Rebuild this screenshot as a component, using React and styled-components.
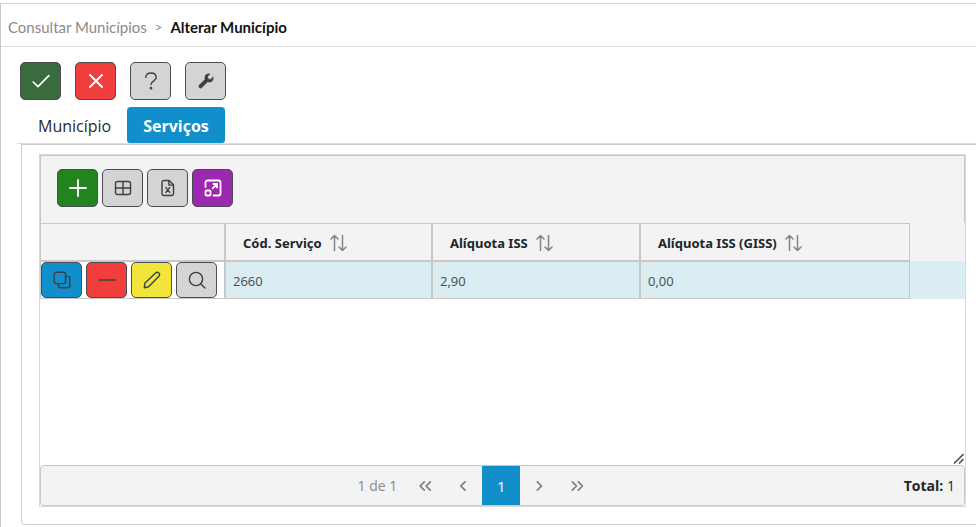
import React, { useState } from 'react';
import styled, { createGlobalStyle } from 'styled-components';

const GlobalStyle = createGlobalStyle`
  * {
    box-sizing: border-box;
  }

  body {
    margin: 0;
    background-color: #fff;
    color: #212529;
    font-family: 'Open Sans', 'Noto Sans', sans-serif;
    font-size: 13px;
  }
`;

const Page = styled.div`
  display: flex;
  flex-direction: column;
  min-height: 100vh;
  padding-top: 3px;
`;

const Frame = styled.div`
  display: flex;
  flex: 1;
  flex-direction: column;
  border-top: 1px solid #d4d4d4;
  border-left: 1px solid #c8c8c8;
`;

const Breadcrumb = styled.nav`
  display: flex;
  align-items: center;
  gap: 8px;
  height: 43px;
  padding: 4px 7px 0;
  border-bottom: 1px solid #dedede;
  font-family: Lato, sans-serif;
  font-size: 15px;
  color: #8a8a8a;
`;

const BreadcrumbLink = styled.a`
  color: inherit;
  text-decoration: none;
`;

const Separator = styled.span`
  font-size: 13px;
`;

const Current = styled.span`
  color: #111;
  font-weight: 700;
`;

const Content = styled.main`
  display: flex;
  flex: 1;
  flex-direction: column;
  padding: 15px 0 2px 16px;
`;

const ButtonRow = styled.div`
  display: flex;
  gap: ${(props) => props.$gap || '4px'};
`;

const PageActions = styled(ButtonRow)`
  padding-left: 3px;
`;

const IconButton = styled.button`
  display: flex;
  align-items: center;
  justify-content: center;
  width: 41px;
  height: ${(props) => props.$height || '38px'};
  padding: 0;
  border: 1px solid #4b4d52;
  border-radius: 5px;
  background-color: ${(props) => props.$bg || '#d4d4d4'};
  color: ${(props) => props.$color || '#3c3f46'};
  cursor: pointer;
`;

const Icon = styled.svg`
  display: block;
  width: 18px;
  height: 18px;
  fill: none;
  stroke: currentColor;
  stroke-width: ${(props) => props.$stroke || 1.4};
  stroke-linecap: round;
  stroke-linejoin: round;
`;

const TabList = styled.div`
  display: flex;
  margin-top: 7px;
  border-bottom: 1px solid #dcdcdc;
`;

const Tab = styled.button`
  height: 36px;
  padding: 1px 16px 0;
  border: none;
  border-radius: 4px 4px 3px 3px;
  background-color: ${(props) => (props.$active ? '#108fca' : 'transparent')};
  color: ${(props) => (props.$active ? '#fff' : '#2b2b2b')};
  font-family: inherit;
  font-size: 16px;
  font-weight: ${(props) => (props.$active ? 700 : 400)};
  cursor: pointer;

  &:first-child {
    padding-left: 21px;
  }
`;

const Panel = styled.section`
  display: flex;
  flex: 1;
  flex-direction: column;
  margin-left: 4px;
  padding: 9px 10px 17px 17px;
  border: 1px solid #cfcfcf;
  border-right: none;
  border-radius: 0 0 0 4px;
`;

const Grid = styled.div`
  display: flex;
  flex: 1;
  flex-direction: column;
  border: 1px solid #d9d9d9;
`;

const Toolbar = styled.div`
  padding: 13px 16px 16px;
  border: 1px solid #c8c8c8;
  border-bottom: none;
  background-color: #f3f3f3;
`;

const ScrollArea = styled.div`
  position: relative;
  flex: 1;
`;

const Table = styled.table`
  width: 100%;
  table-layout: fixed;
  border-collapse: separate;
  border-spacing: 0;
`;

const Column = styled.col`
  width: ${(props) => props.$width};
`;

const HeaderRow = styled.tr`
  height: 38px;
  background-color: #f3f3f3;
`;

const HeaderCell = styled.th`
  padding: 2px 17px 0;
  border: 1px solid #c8c8c8;
  text-align: left;
`;

const SortButton = styled.button`
  display: flex;
  align-items: center;
  gap: 7px;
  padding: 0;
  border: none;
  background: none;
  color: inherit;
  font-family: 'Noto Sans', sans-serif;
  font-size: 13px;
  font-weight: 700;
  white-space: nowrap;
  cursor: pointer;

  svg {
    color: #858585;
  }
`;

const BodyRow = styled.tr`
  height: 38px;
  background-color: #d9edf3;
`;

const Cell = styled.td`
  padding: 2px 7px 0;
  border: 1px solid #c8c8c8;
  color: #4a4a4a;
`;

const ActionsCell = styled(Cell)`
  padding: 0;
  background-color: #fff;
`;

const FillerCell = styled.td`
  padding: 0;
`;

const ResizeHandle = styled.svg`
  position: absolute;
  right: 1px;
  bottom: 1px;
  width: 11px;
  height: 11px;
  stroke: #555;
  stroke-width: 1.6;
`;

const Footer = styled.div`
  display: flex;
  align-items: center;
  padding-right: 9px;
  border: 1px solid #c8c8c8;
  border-radius: 4px;
  background-color: #f3f3f3;
  font-size: 14px;
`;

const Paginator = styled.div`
  display: flex;
  flex: 1;
  align-items: center;
  justify-content: center;
  color: #8a8a8a;
`;

const PageReport = styled.span`
  padding: 0 9px;
`;

const PageButton = styled.button`
  display: flex;
  align-items: center;
  justify-content: center;
  width: 38px;
  height: 39px;
  margin: 0;
  padding: 0;
  border: none;
  background-color: ${(props) => (props.$active ? '#108fca' : 'transparent')};
  color: ${(props) => (props.$active ? '#fff' : '#7d7d7d')};
  font-family: inherit;
  font-size: 15px;
  cursor: pointer;
`;

const Total = styled.div`
  white-space: nowrap;
`;

const paths = {
  check: <path d="M1.200 10 6 14.600 16.800 3.600" />,
  times: <path d="M3 3l12 12M15 3L3 15" />,
  question: (
    <>
      <path d="M3.800 5.400C3.800 2.600 6 1 9 1s5.200 1.800 5.200 4.600c0 3.200-5.200 3.400-5.200 7" />
      <circle cx="9" cy="16.200" r="0.700" fill="currentColor" />
    </>
  ),
  wrench: (
    <path
      d="M16 5.200 13.700 7.400 11.100 6.900 10.600 4.400 12.900 2.100C10.800 1.300 8.200 2.500 7.900 5c-.1.9 0 1.600.3 2.300L2.300 13.100a1.700 1.700 0 0 0 2.500 2.500L10.800 9.800c.7.3 1.500.4 2.300.3 2.500-.4 3.700-2.900 2.900-4.900z"
      fill="currentColor"
    />
  ),
  plus: <path d="M9 1v16M1 9h16" />,
  table: (
    <>
      <rect x="1.500" y="2.500" width="15" height="13" rx="2" />
      <path d="M9 2.500v13M1.500 9h15" />
    </>
  ),
  excel: (
    <>
      <path d="M3 3.500C3 2.300 3.900 1.500 5 1.500h5.200L14.500 5.800v8.700c0 1.200-.9 2-2 2H5c-1.100 0-2-.8-2-2z" />
      <path d="M9.900 1.700v4.400h4.400" />
      <path d="M6.900 8.600l3.800 4.800M10.700 8.600l-3.800 4.800" />
    </>
  ),
  maximize: (
    <>
      <path d="M1.500 8V3.500c0-1.200.8-2 2-2h11c1.200 0 2 .8 2 2v11c0 1.200-.8 2-2 2H9.500" />
      <rect x="1.500" y="11.500" width="5" height="5" rx="1" />
      <path d="M8.600 9.400 13 5M9.400 5H13v3.600" />
    </>
  ),
  clone: (
    <>
      <rect x="1.200" y="1.200" width="11.400" height="11.400" rx="2" />
      <path d="M12.600 5.400h2.200c1.200 0 2 .8 2 2v7.400c0 1.200-.8 2-2 2H7.400c-1.200 0-2-.8-2-2v-2.200" />
    </>
  ),
  minus: <path d="M1 9h16" />,
  pencil: (
    <path d="M1.300 16.700 2 12 12.600 1.900c1-.9 2.200-.9 3.200 0 1.100 1 1.100 2.300.1 3.300L5.600 15.800z" />
  ),
  search: (
    <>
      <circle cx="8" cy="8" r="6.600" />
      <path d="M12.900 12.900 17 17" />
    </>
  ),
  sort: <path d="M5.500 16.500V1.500M2 5 5.500 1.500 9 5M13.500 1.500v15M10 13l3.500 3.500L17 13" />,
  first: <path d="M8.300 4.800 4.100 9l4.200 4.200M14.300 4.800 10.100 9l4.200 4.200" />,
  prev: <path d="M11 4.800 6.800 9l4.200 4.200" />,
  next: <path d="M7.300 4.800 11.500 9l-4.200 4.200" />,
  last: <path d="M4.300 4.800 8.500 9l-4.200 4.200M10.300 4.800l4.200 4.200-4.200 4.200" />
};

const Glyph = ({ name, stroke }) => (
  <Icon viewBox="0 0 18 18" $stroke={stroke} aria-hidden="true">
    {paths[name]}
  </Icon>
);

const pageActions = [
  { icon: 'check', label: 'Confirmar', bg: '#396b3f', color: '#fff', stroke: 1.7 },
  { icon: 'times', label: 'Cancelar', bg: '#f23d3d', color: '#fff', stroke: 1.9 },
  { icon: 'question', label: 'Ajuda' },
  { icon: 'wrench', label: 'Ferramentas', stroke: 0.5 }
];

const gridActions = [
  { icon: 'plus', label: 'Adicionar', bg: '#22831f', color: '#fff', stroke: 1.8 },
  { icon: 'table', label: 'Colunas' },
  { icon: 'excel', label: 'Exportar' },
  { icon: 'maximize', label: 'Maximizar', bg: '#9c27b0', color: '#fff', stroke: 1.8 }
];

const rowActions = [
  { icon: 'clone', label: 'Duplicar', bg: '#108fca' },
  { icon: 'minus', label: 'Remover', bg: '#f23d3d' },
  { icon: 'pencil', label: 'Editar', bg: '#f1e53c' },
  { icon: 'search', label: 'Visualizar' }
];

const columns = [
  { field: 'codigo', header: 'Cód. Serviço', width: '207px' },
  { field: 'aliquota', header: 'Alíquota ISS', width: '208px' },
  { field: 'aliquotaGiss', header: 'Alíquota ISS (GISS)', width: '270px' }
];

const rows = [{ codigo: '2660', aliquota: '2,90', aliquotaGiss: '0,00' }];

const tabs = ['Município', 'Serviços'];

const renderActions = (actions, height) =>
  actions.map((action) => (
    <IconButton
      key={action.icon}
      type="button"
      aria-label={action.label}
      $bg={action.bg}
      $color={action.color}
      $height={height}
    >
      <Glyph name={action.icon} stroke={action.stroke} />
    </IconButton>
  ));

const App = () => {
  const [activeTab, setActiveTab] = useState('Serviços');

  return (
    <Page>
      <GlobalStyle />
      <Frame>
        <Breadcrumb>
          <BreadcrumbLink href="#municipios">Consultar Municípios</BreadcrumbLink>
          <Separator>&gt;</Separator>
          <Current>Alterar Município</Current>
        </Breadcrumb>
        <Content>
          <PageActions $gap="14px">{renderActions(pageActions)}</PageActions>
          <TabList role="tablist">
            {tabs.map((tab) => (
              <Tab
                key={tab}
                type="button"
                role="tab"
                aria-selected={activeTab === tab}
                $active={activeTab === tab}
                onClick={() => setActiveTab(tab)}
              >
                {tab}
              </Tab>
            ))}
          </TabList>
          <Panel>
            <Grid>
              <Toolbar>
                <ButtonRow>{renderActions(gridActions)}</ButtonRow>
              </Toolbar>
              <ScrollArea>
                <Table>
                  <colgroup>
                    <Column $width="185px" />
                    {columns.map((col) => (
                      <Column key={col.field} $width={col.width} />
                    ))}
                    <Column />
                  </colgroup>
                  <thead>
                    <HeaderRow>
                      <HeaderCell />
                      {columns.map((col) => (
                        <HeaderCell key={col.field} scope="col">
                          <SortButton type="button">
                            {col.header}
                            <Glyph name="sort" stroke={1.5} />
                          </SortButton>
                        </HeaderCell>
                      ))}
                      <FillerCell />
                    </HeaderRow>
                  </thead>
                  <tbody>
                    {rows.map((row) => (
                      <BodyRow key={row.codigo}>
                        <ActionsCell>
                          <ButtonRow>{renderActions(rowActions, '36px')}</ButtonRow>
                        </ActionsCell>
                        {columns.map((col) => (
                          <Cell key={col.field}>{row[col.field]}</Cell>
                        ))}
                        <FillerCell />
                      </BodyRow>
                    ))}
                  </tbody>
                </Table>
                <ResizeHandle viewBox="0 0 11 11" aria-hidden="true">
                  <path d="M1 10.500 10.500 1M6 10.500l4.500-4.500" />
                </ResizeHandle>
              </ScrollArea>
              <Footer>
                <Paginator>
                  <PageReport>1 de 1</PageReport>
                  <PageButton type="button" aria-label="Primeira página">
                    <Glyph name="first" stroke={1.7} />
                  </PageButton>
                  <PageButton type="button" aria-label="Página anterior">
                    <Glyph name="prev" stroke={1.7} />
                  </PageButton>
                  <PageButton type="button" $active>
                    1
                  </PageButton>
                  <PageButton type="button" aria-label="Próxima página">
                    <Glyph name="next" stroke={1.7} />
                  </PageButton>
                  <PageButton type="button" aria-label="Última página">
                    <Glyph name="last" stroke={1.7} />
                  </PageButton>
                </Paginator>
                <Total>
                  <strong>Total:</strong> 1
                </Total>
              </Footer>
            </Grid>
          </Panel>
        </Content>
      </Frame>
    </Page>
  );
};

export default App;
